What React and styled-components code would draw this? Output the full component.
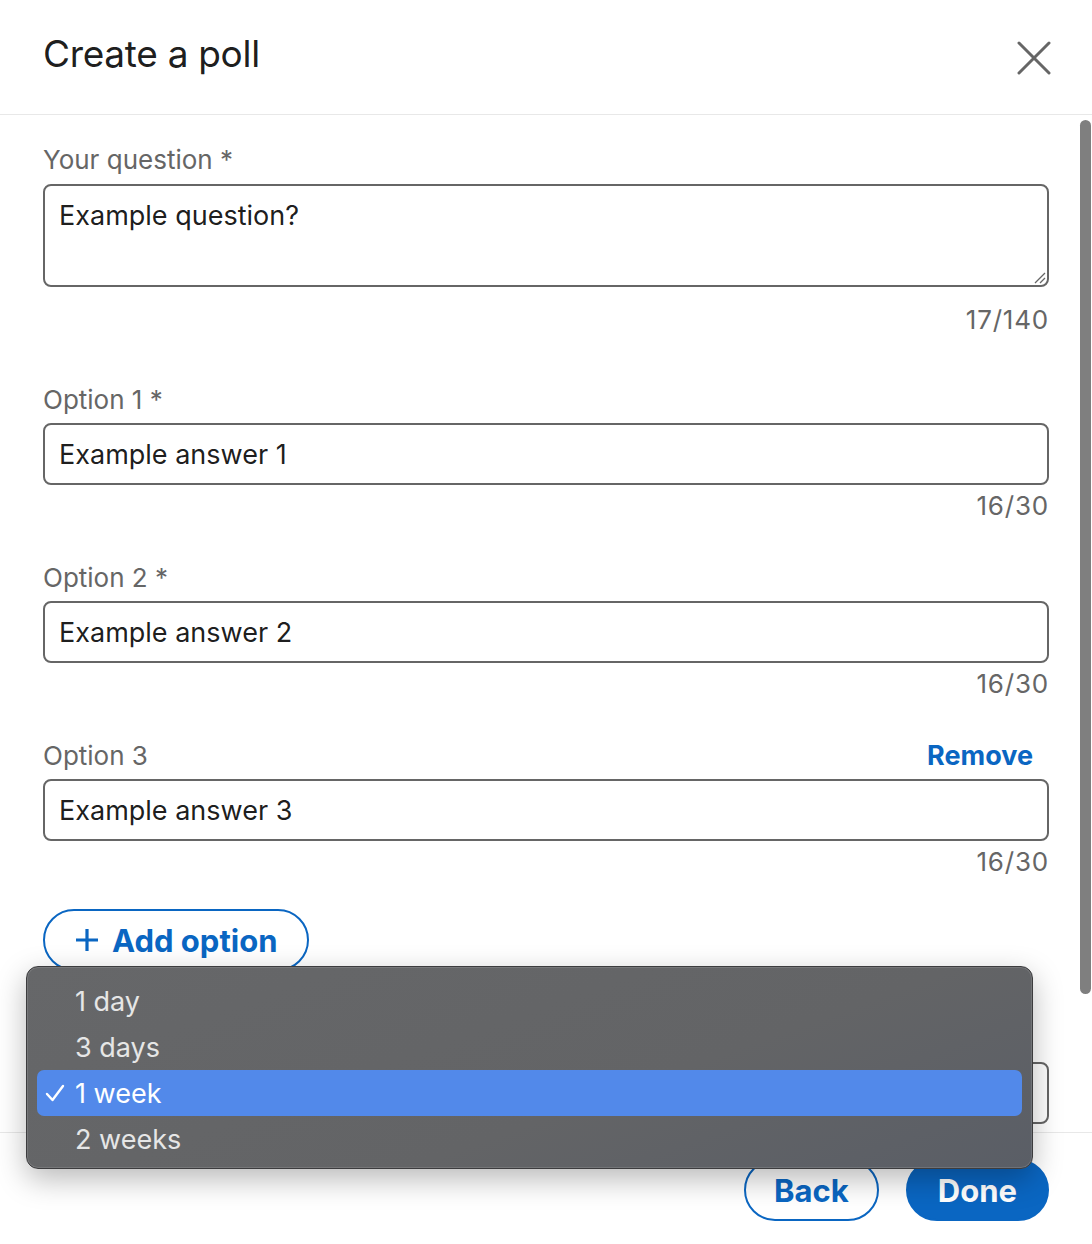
import styled, { createGlobalStyle } from 'styled-components';

const GlobalStyle = createGlobalStyle`
    html, body {
        margin: 0;
        padding: 0;
        background: #ffffff;
    }
    body {
        font-family: Inter, "Noto Sans", "Liberation Sans", sans-serif;
        color: rgba(0, 0, 0, 0.9);
    }
`

const Modal = styled.div`
    position: relative;
    width: 1092px;
    height: 1244px;
    overflow: hidden;
    background: #ffffff;
`

const Header = styled.header`
    height: 115px;
    border-bottom: 1px solid #e8e8e8;
    display: flex;
    align-items: center;
    justify-content: space-between;
    padding: 0 40px 0 43px;
    box-sizing: border-box;

    h1 {
        margin: 0 0 8px 0;
        font-size: 37px;
        font-weight: 400;
        letter-spacing: -0.3px;
        color: rgba(0, 0, 0, 0.9);
    }
`

const CloseButton = styled.button`
    border: none;
    background: none;
    padding: 0;
    width: 36px;
    height: 36px;
    margin-top: 2px;
    display: flex;
    align-items: center;
    justify-content: center;
`

const Body = styled.div`
    height: 1017px;
    display: flex;
    overflow: hidden;
`

const Content = styled.div`
    flex: 1;
    padding: 29px 29px 0 43px;
    display: flex;
    flex-direction: column;
`

const ScrollTrack = styled.div`
    width: 14px;
    padding: 5px 1px 0 2px;
    box-sizing: border-box;
`

const ScrollThumb = styled.div`
    height: 874px;
    border-radius: 6px;
    background: #7f7f7f;
`

const Field = styled.div`
    display: flex;
    flex-direction: column;
    margin-top: ${p => p.$gap || 0}px;
`

const LabelRow = styled.div`
    display: flex;
    justify-content: space-between;
    align-items: center;
    margin-bottom: ${p => p.$below || 7}px;
`

const Label = styled.label`
    font-size: 26px;
    line-height: 32px;
    color: #666666;
`

const RemoveLink = styled.button`
    border: none;
    background: none;
    padding: 0 16px 0 0;
    font-family: inherit;
    font-size: 27px;
    font-weight: 700;
    line-height: 32px;
    color: #0a66c2;
`

const TextArea = styled.div`
    position: relative;
    height: 103px;
    border: 2px solid #666666;
    border-radius: 8px;
    box-sizing: border-box;
    padding: 14px 14px;
    font-size: 27px;
    line-height: 32px;
    color: rgba(0, 0, 0, 0.9);
`

const Grip = styled.svg`
    position: absolute;
    right: 1px;
    bottom: 1px;
`

const Input = styled.div`
    height: 62px;
    border: 2px solid #666666;
    border-radius: 8px;
    box-sizing: border-box;
    padding: 0 14px;
    display: flex;
    align-items: center;
    font-size: 27px;
    color: rgba(0, 0, 0, 0.9);
`

const Counter = styled.div`
    align-self: flex-end;
    font-size: 26px;
    letter-spacing: 0.8px;
    line-height: 32px;
    color: #666666;
    margin-top: ${p => p.$gap || 5}px;
`

const AddButton = styled.button`
    align-self: flex-start;
    margin-top: 31px;
    height: 62px;
    padding: 0 30px 0 30px;
    border: 2px solid #0a66c2;
    border-radius: 31px;
    background: #ffffff;
    display: flex;
    align-items: center;
    gap: 13px;
    font-family: inherit;
    font-size: 31px;
    font-weight: 700;
    color: #0a66c2;
`

const Select = styled.div`
    height: 62px;
    border: 2px solid #666666;
    border-radius: 8px;
    box-sizing: border-box;
    padding: 0 14px;
    display: flex;
    align-items: center;
    font-size: 27px;
`

const Footer = styled.footer`
    height: 110px;
    border-top: 1px solid #e8e8e8;
    display: flex;
    justify-content: flex-end;
    align-items: flex-start;
    gap: 27px;
    padding: 26px 43px 0 0;
    box-sizing: border-box;
`

const PillButton = styled.button`
    height: 62px;
    padding: 0 ${p => p.$pad}px;
    border-radius: 31px;
    border: 2px solid #0a66c2;
    background: ${p => (p.$primary ? '#0a66c2' : '#ffffff')};
    color: ${p => (p.$primary ? '#ffffff' : '#0a66c2')};
    font-family: inherit;
    font-size: 31px;
    font-weight: 700;
`

const Menu = styled.ul`
    position: absolute;
    left: 26px;
    top: 966px;
    width: 1007px;
    height: 203px;
    box-sizing: border-box;
    margin: 0;
    padding: 11px 10px 8px 10px;
    list-style: none;
    border-radius: 12px;
    border: 1px solid #3c3c3e;
    background: linear-gradient(160deg, #666769 0%, #636466 60%, #5a5e66 100%);
    box-shadow: 0 10px 30px rgba(0, 0, 0, 0.28), inset 0 0 0 1px rgba(255, 255, 255, 0.12);
`

const MenuItem = styled.li`
    position: relative;
    height: 46px;
    display: flex;
    align-items: center;
    padding-left: 38px;
    border-radius: 7px;
    font-size: 27px;
    color: ${p => (p.$active ? '#ffffff' : '#e6e6e6')};
    background: ${p => (p.$active ? '#5289ea' : 'transparent')};
`

const Check = styled.span`
    position: absolute;
    left: 8px;
    top: 0;
    bottom: 0;
    display: flex;
    align-items: center;
`

const options = [
    { label: 'Option 1', required: true, value: 'Example answer 1' },
    { label: 'Option 2', required: true, value: 'Example answer 2' },
    { label: 'Option 3', required: false, value: 'Example answer 3', removable: true },
]

const durations = ['1 day', '3 days', '1 week', '2 weeks']

const App = () => {
    return (
        <Modal>
            <GlobalStyle />
            <Header>
                <h1>Create a poll</h1>
                <CloseButton aria-label="Close">
                    <svg width="34" height="34" viewBox="0 0 34 34">
                        <path d="M2 2 L32 32 M32 2 L2 32" stroke="#666666" strokeWidth="3" strokeLinecap="round" />
                    </svg>
                </CloseButton>
            </Header>
            <Body>
                <Content>
                    <Field>
                        <LabelRow $below={8}>
                            <Label>Your question *</Label>
                        </LabelRow>
                        <TextArea>
                            Example question?
                            <Grip width="14" height="14" viewBox="0 0 14 14">
                                <path d="M13 3 L3 13 M13 8 L8 13" stroke="#666666" strokeWidth="1.3" />
                            </Grip>
                        </TextArea>
                        <Counter $gap={17}>17/140</Counter>
                    </Field>
                    {options.map((o, i) => (
                        <Field key={o.label} $gap={i === 0 ? 48 : 40}>
                            <LabelRow>
                                <Label>{o.label}{o.required ? ' *' : ''}</Label>
                                {o.removable && <RemoveLink>Remove</RemoveLink>}
                            </LabelRow>
                            <Input>{o.value}</Input>
                            <Counter>16/30</Counter>
                        </Field>
                    ))}
                    <AddButton>
                        <svg width="24" height="24" viewBox="0 0 24 24">
                            <path d="M12 1 V23 M1 12 H23" stroke="#0a66c2" strokeWidth="3.2" />
                        </svg>
                        Add option
                    </AddButton>
                    <Field $gap={52}>
                        <LabelRow>
                            <Label>Poll duration</Label>
                        </LabelRow>
                        <Select>1 week</Select>
                    </Field>
                </Content>
                <ScrollTrack>
                    <ScrollThumb />
                </ScrollTrack>
            </Body>
            <Footer>
                <PillButton $pad={28}>Back</PillButton>
                <PillButton $primary $pad={30}>Done</PillButton>
            </Footer>
            <Menu>
                {durations.map(d => (
                    <MenuItem key={d} $active={d === '1 week'}>
                        {d === '1 week' && (
                            <Check>
                                <svg width="20" height="20" viewBox="0 0 20 20">
                                    <path d="M2 11 L7.5 17 L18 3" fill="none" stroke="#ffffff" strokeWidth="2.4" strokeLinecap="round" strokeLinejoin="round" />
                                </svg>
                            </Check>
                        )}
                        {d}
                    </MenuItem>
                ))}
            </Menu>
        </Modal>
    )
}

export default App;
